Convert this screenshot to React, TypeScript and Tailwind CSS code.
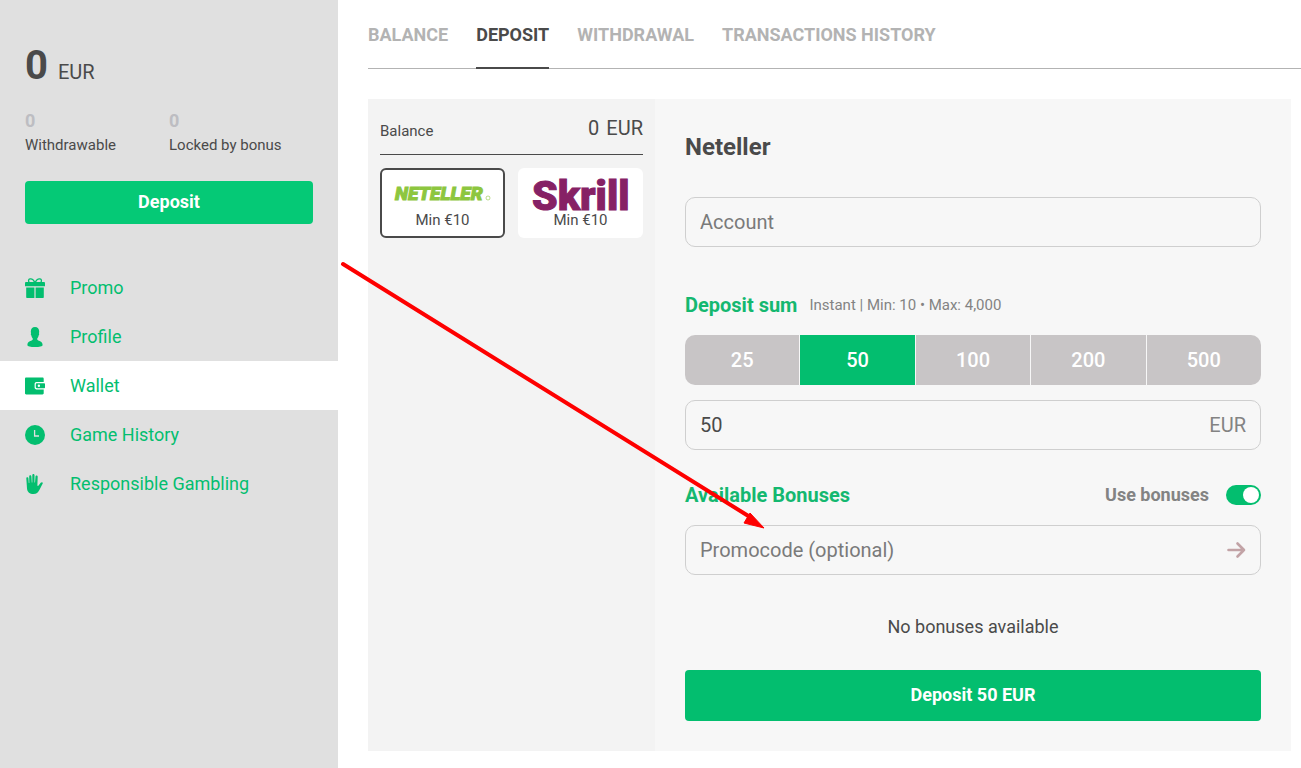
import React, { useState } from "react";
import clsx from "clsx";

type NavItem = { label: string; icon: React.ReactNode };

const iconClass = "w-5 h-5 shrink-0";

const navItems: NavItem[] = [
    {
        label: "Promo",
        icon: (
            <svg viewBox="0 0 20 20" className={iconClass} fill="currentColor" aria-hidden="true">
                <path d="M9.800 4.600C8.800 2.200 6.800.6 5 .9 3.400 1.200 3.200 3 4.200 4.400M10.200 4.600C11.200 2.200 13.200.6 15 .9c1.600.3 1.800 2.100.8 3.500" fill="none" stroke="currentColor" strokeWidth="1.300" />
                <path d="M1.200 4h17.600c.7 0 1.200.5 1.200 1.200v3H0v-3C0 4.500.5 4 1.200 4z" />
                <path d="M1.200 9.400h8.200V20H2.200c-.6 0-1-.4-1-1zM10.600 9.400h8.200V19c0 .6-.4 1-1 1h-7.200z" />
            </svg>
        ),
    },
    {
        label: "Profile",
        icon: (
            <svg viewBox="0 0 20 20" className={iconClass} fill="currentColor" aria-hidden="true">
                <path d="M10 0c2.700 0 4.200 1.900 4.200 4.500 0 .7-.1 1.200-.3 1.700.5.300.400 1.700-.3 2.200-.3 1.500-.6 2.300-1.300 2.800v1.600c1.600 1.400 5.300 1.700 5.300 5.100 0 1.300-3.200 2.100-7.600 2.100s-7.600-.8-7.600-2.100c0-3.400 3.700-3.700 5.300-5.100v-1.600c-.7-.5-1-1.300-1.300-2.800-.7-.5-.8-1.900-.3-2.200-.2-.5-.3-1-.3-1.700C5.800 1.900 7.300 0 10 0z" />
            </svg>
        ),
    },
    {
        label: "Wallet",
        icon: (
            <svg viewBox="0 0 20 20" className={iconClass} fill="currentColor" aria-hidden="true">
                <path d="M1.200 1.500h16.300c.7 0 1.200.5 1.200 1.200V6H11.500C10.400 6 9.600 6.800 9.600 7.900v3.700c0 1.100.8 1.900 1.900 1.900h7.200v3.800c0 .7-.5 1.200-1.200 1.200H1.200C.5 18.500 0 18 0 17.300V2.700c0-.7.5-1.200 1.200-1.200z" />
                <path fillRule="evenodd" d="M12 7.200h7.200c.5 0 .8.3.8.8v3.500c0 .5-.3.8-.8.8H12c-.7 0-1.200-.5-1.200-1.200V8.400c0-.7.5-1.200 1.200-1.200zm1.900 1.400a1.200 1.200 0 1 0 0 2.400 1.200 1.200 0 0 0 0-2.400z" />
            </svg>
        ),
    },
    {
        label: "Game History",
        icon: (
            <svg viewBox="0 0 20 20" className={iconClass} fill="currentColor" aria-hidden="true">
                <circle cx="10" cy="10" r="10" />
                <path d="M9.600 5v6H14" fill="none" stroke="#e0e0e0" strokeWidth="1.300" />
            </svg>
        ),
    },
    {
        label: "Responsible Gambling",
        icon: (
            <svg viewBox="0 0 20 20" className={iconClass} fill="currentColor" aria-hidden="true">
                <path d="M1.300 4.200c0-1.400 2-1.400 2.100 0l.4 4.900h.5L4.200 2.400C4.200.9 6.300.9 6.400 2.400l.4 6.200h.5V1.200C7.300-.4 9.500-.4 9.500 1.200v7.400h.5l.5-6c.1-1.500 2.200-1.400 2.200.1l-.3 8.500c0 .9.7 1 1.200.3l2.100-2.800c.9-1 2.600-.6 2 .8l-3.200 6.200C13.200 18.400 11.500 20 8.500 20 4.800 20 2.300 18.200 2 14.500z" />
            </svg>
        ),
    },
];

const tabs = ["BALANCE", "DEPOSIT", "WITHDRAWAL", "TRANSACTIONS HISTORY"];
const amounts = [25, 50, 100, 200, 500];

function Sidebar() {
    return (
        <aside className="w-[338px] shrink-0 bg-[#e0e0e0]">
            <div className="px-[25px] pt-[41px]">
                <div className="flex items-baseline gap-2.5">
                    <span className="text-[40px] leading-[50px] font-bold">0</span>
                    <span className="text-xl">EUR</span>
                </div>
                <div className="grid grid-cols-2 mt-[18px] text-[15px] leading-6">
                    <div>
                        <div className="text-lg leading-6 font-bold text-[#bdbdc2]">0</div>
                        <div>Withdrawable</div>
                    </div>
                    <div>
                        <div className="text-lg leading-6 font-bold text-[#bdbdc2]">0</div>
                        <div>Locked by bonus</div>
                    </div>
                </div>
                <button type="button" className="mt-6 h-[43px] w-full rounded bg-[#05c976] pb-0.5 text-lg font-bold text-white">
                    Deposit
                </button>
            </div>

            <nav className="mt-[39px]">
                {navItems.map((item) => (
                    <a
                        key={item.label}
                        href="#"
                        className={clsx(
                            "flex items-center gap-[25px] h-[49px] px-[25px] text-lg text-[#03be6f]",
                            item.label === "Wallet" && "bg-white"
                        )}
                    >
                        {item.icon}
                        {item.label}
                    </a>
                ))}
            </nav>
        </aside>
    );
}

function PaymentMethods() {
    return (
        <div className="w-[287px] shrink-0 bg-[#f3f3f3] px-3 pt-3">
            <div className="flex items-center justify-between h-11 pb-2.5 border-b border-[#4a4a4a]">
                <span className="pt-2 text-[15px]">Balance</span>
                <span className="flex gap-[7px] text-xl">
                    <span>0</span>
                    <span>EUR</span>
                </span>
            </div>
            <div className="mt-[13px] grid grid-cols-2 gap-[13px]">
                <button type="button" className="flex flex-col items-center h-[70px] rounded-md border-2 border-[#4a4a4a] bg-white">
                    <svg viewBox="0 0 100 38" className="h-[38px] w-[100px]" role="img" aria-label="Neteller">
                        <text x="2" y="30" fill="#8dc63f" stroke="#8dc63f" strokeWidth="1" fontFamily="Roboto, sans-serif" fontSize="19" fontWeight="900" fontStyle="italic">NETELLER</text>
                        <circle cx="95" cy="28" r="2" fill="none" stroke="#8dc63f" strokeWidth="0.600" />
                    </svg>
                    <span className="text-[15px] leading-6">Min €10</span>
                </button>
                <button type="button" className="flex flex-col items-center h-[70px] rounded-md bg-white pt-0.5">
                    <svg viewBox="0 0 100 38" className="h-[38px] w-[100px] overflow-visible" role="img" aria-label="Skrill">
                        <text x="1" y="40" fill="#862165" stroke="#862165" strokeWidth="1" fontFamily="Roboto, sans-serif" fontSize="41" fontWeight="900">Skrill</text>
                    </svg>
                    <span className="text-[15px] leading-6">Min €10</span>
                </button>
            </div>
        </div>
    );
}

function DepositForm() {
    const [amount, setAmount] = useState("50");
    const [useBonuses, setUseBonuses] = useState(true);

    return (
        <form className="flex-1 min-w-0 bg-[#f7f7f7] p-[30px]" onSubmit={(e) => e.preventDefault()}>
            <h1 className="text-2xl leading-9 font-bold">Neteller</h1>
            <input
                type="text"
                aria-label="Account"
                placeholder="Account"
                className="mt-8 h-[50px] w-full rounded-[10px] border border-[#cfcfcf] px-[14px] text-xl placeholder:text-[#7a7a7a]"
            />

            <div className="mt-[43px] flex items-center gap-3 h-[30px]">
                <h2 className="text-xl font-bold text-[#14b870]">Deposit sum</h2>
                <span className="text-[15px] text-[#838383]">Instant | Min: 10 • Max: 4,000</span>
            </div>
            <div className="mt-[15px] grid grid-cols-5 gap-px rounded-[10px] overflow-hidden">
                {amounts.map((value) => (
                    <button
                        key={value}
                        type="button"
                        aria-pressed={amount === String(value)}
                        onClick={() => setAmount(String(value))}
                        className={clsx(
                            "h-[50px] text-xl font-medium text-white",
                            amount === String(value) ? "bg-[#03be6f]" : "bg-[#c8c5c6]"
                        )}
                    >
                        {value}
                    </button>
                ))}
            </div>
            <label className="mt-[15px] flex items-center h-[50px] rounded-[10px] border border-[#cfcfcf] px-[14px] text-xl">
                <input
                    type="text"
                    aria-label="Deposit sum"
                    value={amount}
                    onChange={(e) => setAmount(e.target.value)}
                    className="flex-1 min-w-0 outline-none"
                />
                <span className="text-[#838383]">EUR</span>
            </label>

            <div className="mt-[30px] flex items-center justify-between h-[30px]">
                <h2 className="text-xl font-bold text-[#14b870]">Available Bonuses</h2>
                <label className="flex items-center gap-[17px] text-lg font-bold text-[#838383]">
                    Use bonuses
                    <input
                        type="checkbox"
                        checked={useBonuses}
                        onChange={(e) => setUseBonuses(e.target.checked)}
                        className="appearance-none flex items-center w-[35px] h-5 px-0.5 rounded-full bg-[#c8c5c6] checked:bg-[#03be6f] checked:justify-end before:w-4 before:h-4 before:rounded-full before:bg-white before:content-['']"
                    />
                </label>
            </div>
            <div className="mt-[15px] flex items-center h-[50px] rounded-[10px] border border-[#cfcfcf] px-[14px]">
                <input
                    type="text"
                    aria-label="Promocode"
                    placeholder="Promocode (optional)"
                    className="flex-1 min-w-0 text-xl outline-none placeholder:text-[#7a7a7a]"
                />
                <button type="button" aria-label="Apply promocode">
                    <svg viewBox="0 0 20 20" className="w-5 h-5" fill="none" stroke="#c2a3a6" strokeWidth="2.600" strokeLinecap="round" strokeLinejoin="round">
                        <path d="M2.500 10H18M11.500 3.500 18 10l-6.500 6.500" />
                    </svg>
                </button>
            </div>

            <p className="mt-10 text-lg leading-6 text-center">No bonuses available</p>
            <button type="submit" className="mt-[31px] h-[51px] w-full rounded bg-[#03be6f] pb-0.5 text-lg font-bold text-white">
                Deposit {amount} EUR
            </button>
        </form>
    );
}

// Red pointer from the sidebar menu to the promocode field
function Pointer() {
    return (
        <svg className="absolute left-[338px] top-[256px] w-[432px] h-[280px] pointer-events-none" viewBox="0 0 432 280" aria-hidden="true">
            <path d="M5 8 412 261" stroke="#fe0000" strokeWidth="4" strokeLinecap="round" />
            <path d="M426 272 406 267 412 257z" fill="#fe0000" stroke="#fe0000" />
        </svg>
    );
}

export default function App() {
    return (
        <div className="relative flex min-h-screen bg-white font-[Roboto,sans-serif] text-[#4a4a4a]">
            <Sidebar />
            <main className="flex-1 min-w-0 pl-[30px]">
                <nav className="flex gap-7 h-[69px] border-b border-[#b3b3b3]">
                    {tabs.map((tab) => (
                        <a
                            key={tab}
                            href="#"
                            className={clsx(
                                "h-[69px] border-b-2 text-lg leading-[70px] font-bold",
                                tab === "DEPOSIT" ? "border-[#4a4a4a]" : "border-transparent text-[#b3b3b3]"
                            )}
                        >
                            {tab}
                        </a>
                    ))}
                </nav>
                <div className="mt-[30px] mr-[10px] flex">
                    <PaymentMethods />
                    <DepositForm />
                </div>
            </main>
            <Pointer />
        </div>
    );
}
